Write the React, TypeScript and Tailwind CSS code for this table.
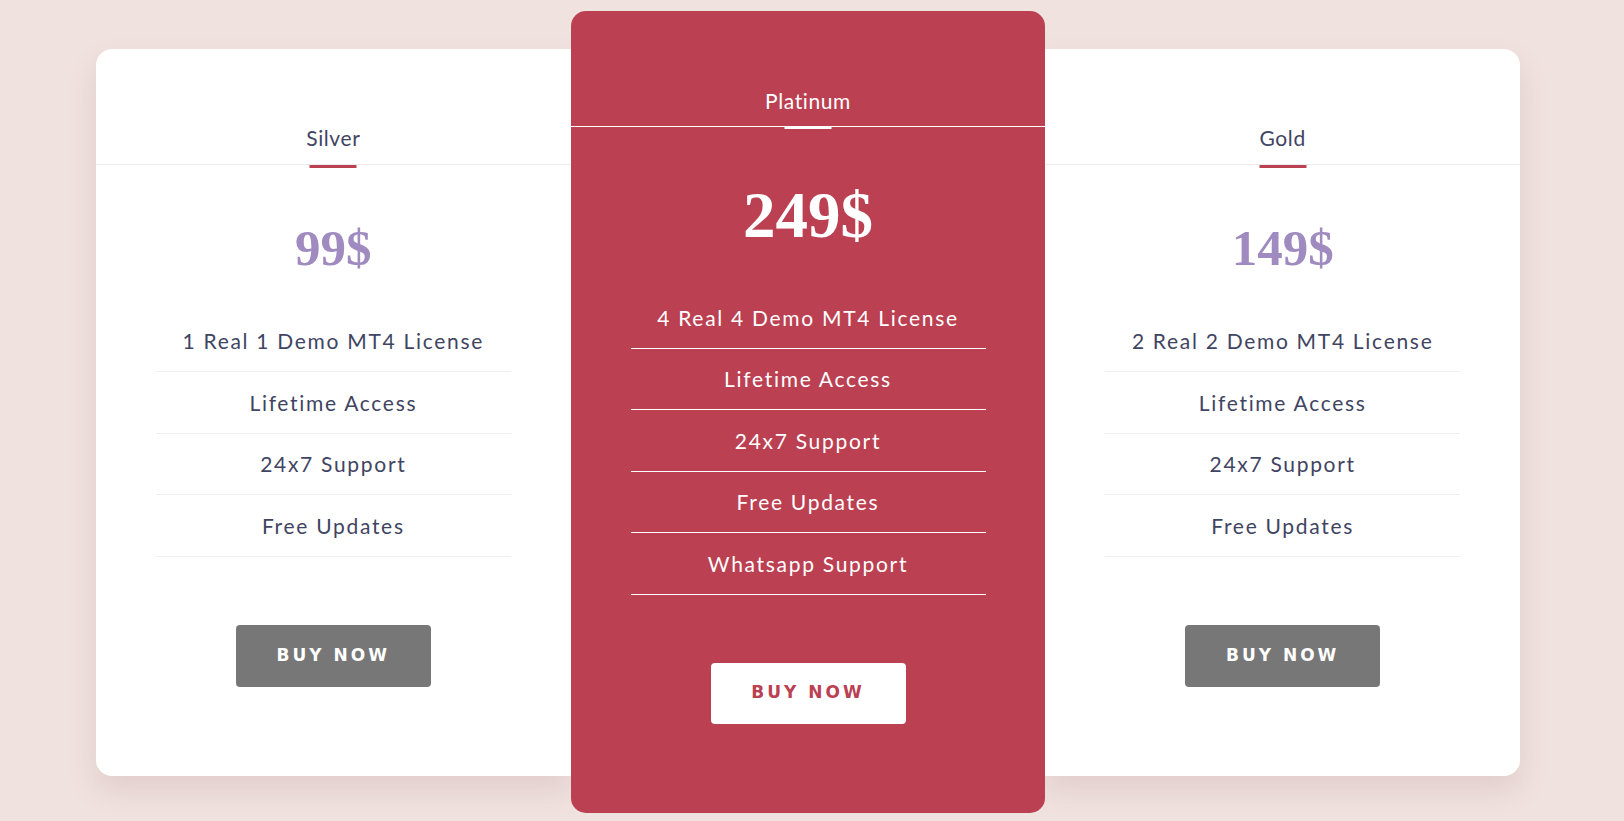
import React from "react";

type Plan = {
  name: string;
  price: string;
  features: string[];
  featured?: boolean;
};

const plans: Plan[] = [
  {
    name: "Silver",
    price: "99$",
    features: ["1 Real 1 Demo MT4 License", "Lifetime Access", "24x7 Support", "Free Updates"],
  },
  {
    name: "Platinum",
    price: "249$",
    featured: true,
    features: [
      "4 Real 4 Demo MT4 License",
      "Lifetime Access",
      "24x7 Support",
      "Free Updates",
      "Whatsapp Support",
    ],
  },
  {
    name: "Gold",
    price: "149$",
    features: ["2 Real 2 Demo MT4 License", "Lifetime Access", "24x7 Support", "Free Updates"],
  },
];

const sans = { fontFamily: "Lato, 'Noto Sans', sans-serif" };
const serif = { fontFamily: "'Liberation Serif', 'DejaVu Serif', serif" };
const btnFont = { fontFamily: "'DejaVu Sans', 'Liberation Sans', sans-serif" };

function SideCard({ plan, side }: { plan: Plan; side: "left" | "right" }) {
  return (
    <div
      className={`flex h-[727px] w-[475px] flex-col items-center bg-white shadow-[0_14px_28px_rgba(150,100,100,0.16)] ${
        side === "left" ? "rounded-l-[16px]" : "rounded-r-[16px]"
      }`}
    >
      <div className="relative w-full border-b border-[#ebebeb] pb-[12px] pt-[75px] text-center">
        <span className="text-[21px] leading-[28px] tracking-[0.6px] text-[#3f4462]" style={sans}>
          {plan.name}
        </span>
        <div className="absolute -bottom-[4px] left-1/2 h-[3px] w-[47px] -translate-x-1/2 bg-[#bb4052]" />
      </div>
      <div className="mt-[57px] text-[51px] font-bold leading-[52px] text-[#a08bc0]" style={serif}>
        {plan.price}
      </div>
      <ul className="mt-[37px] w-[355px]">
        {plan.features.map((f) => (
          <li
            key={f}
            className="border-b border-[#efefef] pb-[16px] pt-[16.5px] text-center text-[21px] leading-[28px] tracking-[1.7px] text-[#3f4462]"
            style={sans}
          >
            {f}
          </li>
        ))}
      </ul>
      <button
        className="mt-[68px] h-[62px] w-[195px] rounded-[4px] bg-[#777777] text-[17px] font-bold tracking-[3px] text-white"
        style={btnFont}
      >
        BUY NOW
      </button>
    </div>
  );
}

function FeaturedCard({ plan }: { plan: Plan }) {
  return (
    <div className="relative z-10 flex h-[802px] w-[475px] flex-col items-center rounded-[15px] bg-[#bb4052]">
      <div className="relative w-full border-b border-white pb-[11px] pt-[76px] text-center">
        <span className="text-[21px] leading-[28px] tracking-[0.6px] text-white" style={sans}>
          {plan.name}
        </span>
        <div className="absolute -bottom-[3px] left-1/2 h-[2px] w-[47px] -translate-x-1/2 bg-white" />
      </div>
      <div className="mt-[55px] text-[65px] font-bold leading-[66px] text-white" style={serif}>
        {plan.price}
      </div>
      <ul className="mt-[39px] w-[355px]">
        {plan.features.map((f) => (
          <li
            key={f}
            className="border-b border-white pb-[16px] pt-[16.5px] text-center text-[21px] leading-[28px] tracking-[1.7px] text-white"
            style={sans}
          >
            {f}
          </li>
        ))}
      </ul>
      <button
        className="mt-[68px] h-[61px] w-[195px] rounded-[4px] bg-white text-[17px] font-bold tracking-[3px] text-[#bb4052]"
        style={btnFont}
      >
        BUY NOW
      </button>
    </div>
  );
}

export default function App() {
  return (
    <div className="min-h-screen w-full bg-[#f0e2df]">
      <div className="ml-[96px] flex w-[1424px] items-center pt-[11px]">
        <SideCard plan={plans[0]} side="left" />
        <FeaturedCard plan={plans[1]} />
        <SideCard plan={plans[2]} side="right" />
      </div>
    </div>
  );
}
